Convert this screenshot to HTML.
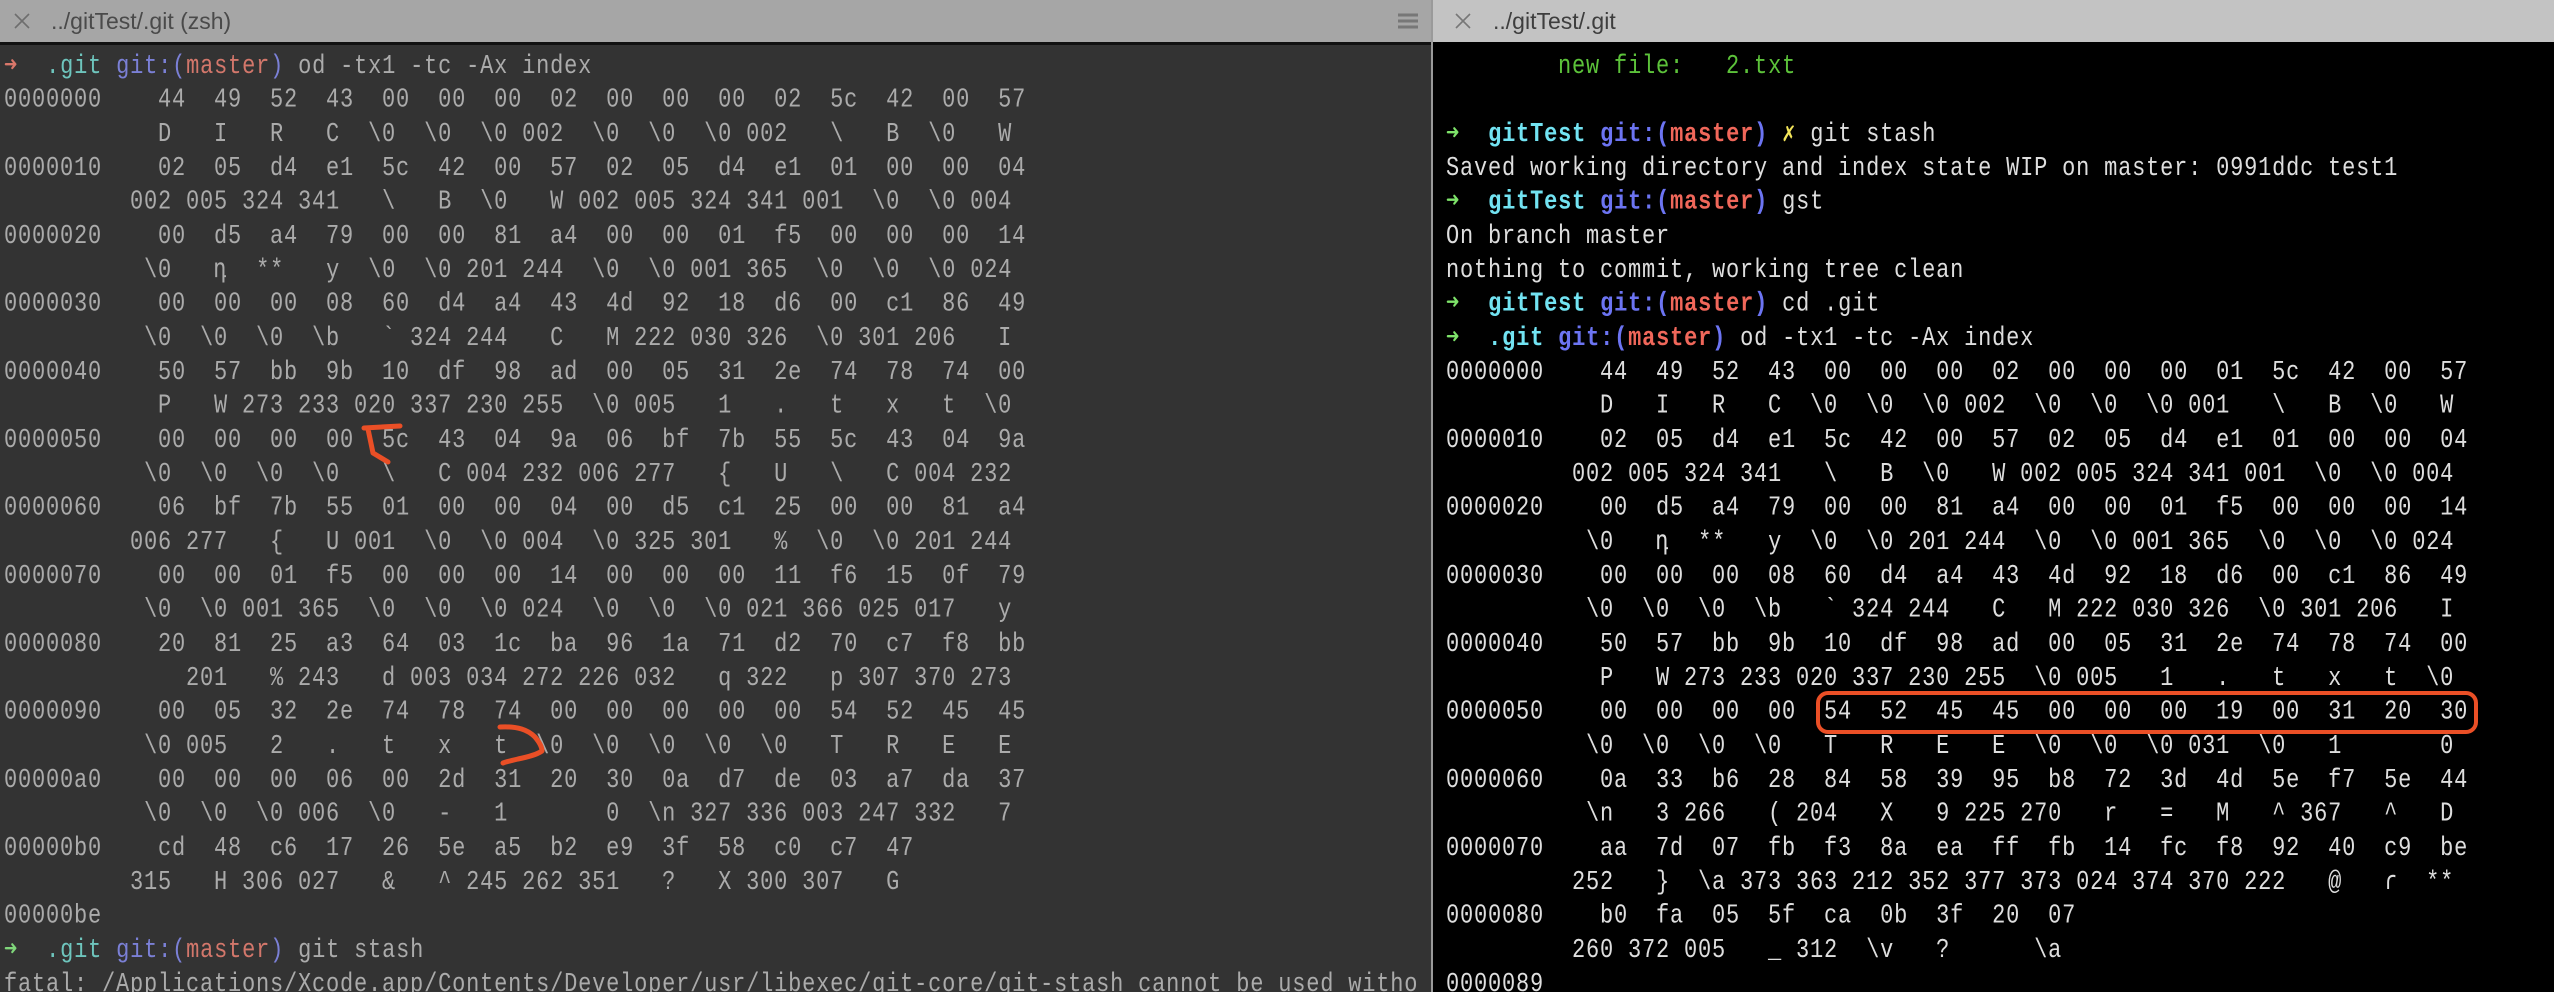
<!DOCTYPE html>
<html><head><meta charset="utf-8"><style>
html,body{margin:0;padding:0;width:2554px;height:992px;overflow:hidden;background:#000}
.t{position:absolute;top:0;height:42px;font-family:"Liberation Sans",sans-serif;font-size:23px;line-height:42px}
#lt{left:0;width:1431px;background:#a6a6a6;color:#4a4a4a;border-bottom:3px solid #111}
#rt{left:1433px;width:1121px;background:#c3c3c3;color:#3e3e3e;border-bottom:3px solid #000}
.x{position:absolute;top:12px;width:18px;height:18px}
#lp{position:absolute;left:0;top:45px;width:1431px;height:947px;background:#333;overflow:hidden}
#rp{position:absolute;left:1433px;top:45px;width:1121px;height:947px;background:#000;overflow:hidden}
#div{position:absolute;left:1431px;top:0;width:2px;height:992px;background:#9a9a9a}
pre{position:absolute;margin:0;font-family:"Liberation Mono","DejaVu Sans Mono",monospace;font-size:22px;letter-spacing:0.8px;line-height:28.333px;white-space:pre;transform:scaleY(1.2);transform-origin:0 0}
#lpre{left:4px;top:5px;color:#ababab}
#rpre{left:13px;top:5px;color:#dedede}
.ar{color:#d9776a}.ag{color:#7fd67a}.tl{color:#6ec5bd}.bl{color:#7b80d6}.rd{color:#d3776b}
.b{font-weight:bold}.g2{color:#7ee36a}.cy{color:#72e3f2}.bl2{color:#6c74f2}.rd2{color:#f0675a}.yl{color:#f2e45a}.gr{color:#5cc23a}
</style></head><body>
<div id="lt" class="t"><svg class="x" style="left:13px" viewBox="0 0 18 18"><path d="M2 2L16 16M16 2L2 16" stroke="#6e6e6e" stroke-width="1.6"/></svg><span style="position:absolute;left:51px">../gitTest/.git (zsh)</span>
<svg style="position:absolute;left:1398px;top:13px" width="20" height="16" viewBox="0 0 20 16"><path d="M0 2H20M0 8H20M0 14H20" stroke="#777" stroke-width="3"/></svg></div>
<div id="rt" class="t"><svg class="x" style="left:21px" viewBox="0 0 18 18"><path d="M2 2L16 16M16 2L2 16" stroke="#777" stroke-width="1.6"/></svg><span style="position:absolute;left:60px">../gitTest/.git</span></div>
<div id="div"></div>
<div id="lp"><pre id="lpre"><span class="ar">➜</span>  <span class="tl">.git</span> <span class="bl">git:(</span><span class="rd">master</span><span class="bl">)</span> od -tx1 -tc -Ax index
0000000    44  49  52  43  00  00  00  02  00  00  00  02  5c  42  00  57
           D   I   R   C  \0  \0  \0 002  \0  \0  \0 002   \   B  \0   W
0000010    02  05  d4  e1  5c  42  00  57  02  05  d4  e1  01  00  00  04
         002 005 324 341   \   B  \0   W 002 005 324 341 001  \0  \0 004
0000020    00  d5  a4  79  00  00  81  a4  00  00  01  f5  00  00  00  14
          \0   դ  **   y  \0  \0 201 244  \0  \0 001 365  \0  \0  \0 024
0000030    00  00  00  08  60  d4  a4  43  4d  92  18  d6  00  c1  86  49
          \0  \0  \0  \b   ` 324 244   C   M 222 030 326  \0 301 206   I
0000040    50  57  bb  9b  10  df  98  ad  00  05  31  2e  74  78  74  00
           P   W 273 233 020 337 230 255  \0 005   1   .   t   x   t  \0
0000050    00  00  00  00  5c  43  04  9a  06  bf  7b  55  5c  43  04  9a
          \0  \0  \0  \0   \   C 004 232 006 277   {   U   \   C 004 232
0000060    06  bf  7b  55  01  00  00  04  00  d5  c1  25  00  00  81  a4
         006 277   {   U 001  \0  \0 004  \0 325 301   %  \0  \0 201 244
0000070    00  00  01  f5  00  00  00  14  00  00  00  11  f6  15  0f  79
          \0  \0 001 365  \0  \0  \0 024  \0  \0  \0 021 366 025 017   y
0000080    20  81  25  a3  64  03  1c  ba  96  1a  71  d2  70  c7  f8  bb
             201   % 243   d 003 034 272 226 032   q 322   p 307 370 273
0000090    00  05  32  2e  74  78  74  00  00  00  00  00  54  52  45  45
          \0 005   2   .   t   x   t  \0  \0  \0  \0  \0   T   R   E   E
00000a0    00  00  00  06  00  2d  31  20  30  0a  d7  de  03  a7  da  37
          \0  \0  \0 006  \0   -   1       0  \n 327 336 003 247 332   7
00000b0    cd  48  c6  17  26  5e  a5  b2  e9  3f  58  c0  c7  47
         315   H 306 027   &   ^ 245 262 351   ?   X 300 307   G
00000be
<span class="ag">➜</span>  <span class="tl">.git</span> <span class="bl">git:(</span><span class="rd">master</span><span class="bl">)</span> git stash
fatal: /Applications/Xcode.app/Contents/Developer/usr/libexec/git-core/git-stash cannot be used witho</pre></div>
<div id="rp"><pre id="rpre">        <span class="gr">new file:   2.txt</span>

<span class="g2 b">➜</span>  <span class="cy b">gitTest</span> <span class="bl2 b">git:(</span><span class="rd2 b">master</span><span class="bl2 b">)</span> <span class="yl b">✗</span> git stash
Saved working directory and index state WIP on master: 0991ddc test1
<span class="g2 b">➜</span>  <span class="cy b">gitTest</span> <span class="bl2 b">git:(</span><span class="rd2 b">master</span><span class="bl2 b">)</span> gst
On branch master
nothing to commit, working tree clean
<span class="g2 b">➜</span>  <span class="cy b">gitTest</span> <span class="bl2 b">git:(</span><span class="rd2 b">master</span><span class="bl2 b">)</span> cd .git
<span class="g2 b">➜</span>  <span class="cy b">.git</span> <span class="bl2 b">git:(</span><span class="rd2 b">master</span><span class="bl2 b">)</span> od -tx1 -tc -Ax index
0000000    44  49  52  43  00  00  00  02  00  00  00  01  5c  42  00  57
           D   I   R   C  \0  \0  \0 002  \0  \0  \0 001   \   B  \0   W
0000010    02  05  d4  e1  5c  42  00  57  02  05  d4  e1  01  00  00  04
         002 005 324 341   \   B  \0   W 002 005 324 341 001  \0  \0 004
0000020    00  d5  a4  79  00  00  81  a4  00  00  01  f5  00  00  00  14
          \0   դ  **   y  \0  \0 201 244  \0  \0 001 365  \0  \0  \0 024
0000030    00  00  00  08  60  d4  a4  43  4d  92  18  d6  00  c1  86  49
          \0  \0  \0  \b   ` 324 244   C   M 222 030 326  \0 301 206   I
0000040    50  57  bb  9b  10  df  98  ad  00  05  31  2e  74  78  74  00
           P   W 273 233 020 337 230 255  \0 005   1   .   t   x   t  \0
0000050    00  00  00  00  54  52  45  45  00  00  00  19  00  31  20  30
          \0  \0  \0  \0   T   R   E   E  \0  \0  \0 031  \0   1       0
0000060    0a  33  b6  28  84  58  39  95  b8  72  3d  4d  5e  f7  5e  44
          \n   3 266   ( 204   X   9 225 270   r   =   M   ^ 367   ^   D
0000070    aa  7d  07  fb  f3  8a  ea  ff  fb  14  fc  f8  92  40  c9  be
         252   }  \a 373 363 212 352 377 373 024 374 370 222   @   ɾ  **
0000080    b0  fa  05  5f  ca  0b  3f  20  07
         260 372 005   _ 312  \v   ?      \a
0000089</pre></div>
<svg style="position:absolute;left:0;top:0" width="2554" height="992">
<g fill="none" stroke="#ea4f26" stroke-width="5" stroke-linecap="round" stroke-linejoin="round">
<path d="M364 428L400 426M368 429L373 453L388 462"/>
<path d="M500 727C518 726 528 730 535 737C540 743 542 748 542 751C536 755 528 757 518 759C510 761 505 762 503 763"/>
<rect x="1818" y="693" width="658" height="39" rx="10" stroke-width="4"/>
</g></svg>
</body></html>
